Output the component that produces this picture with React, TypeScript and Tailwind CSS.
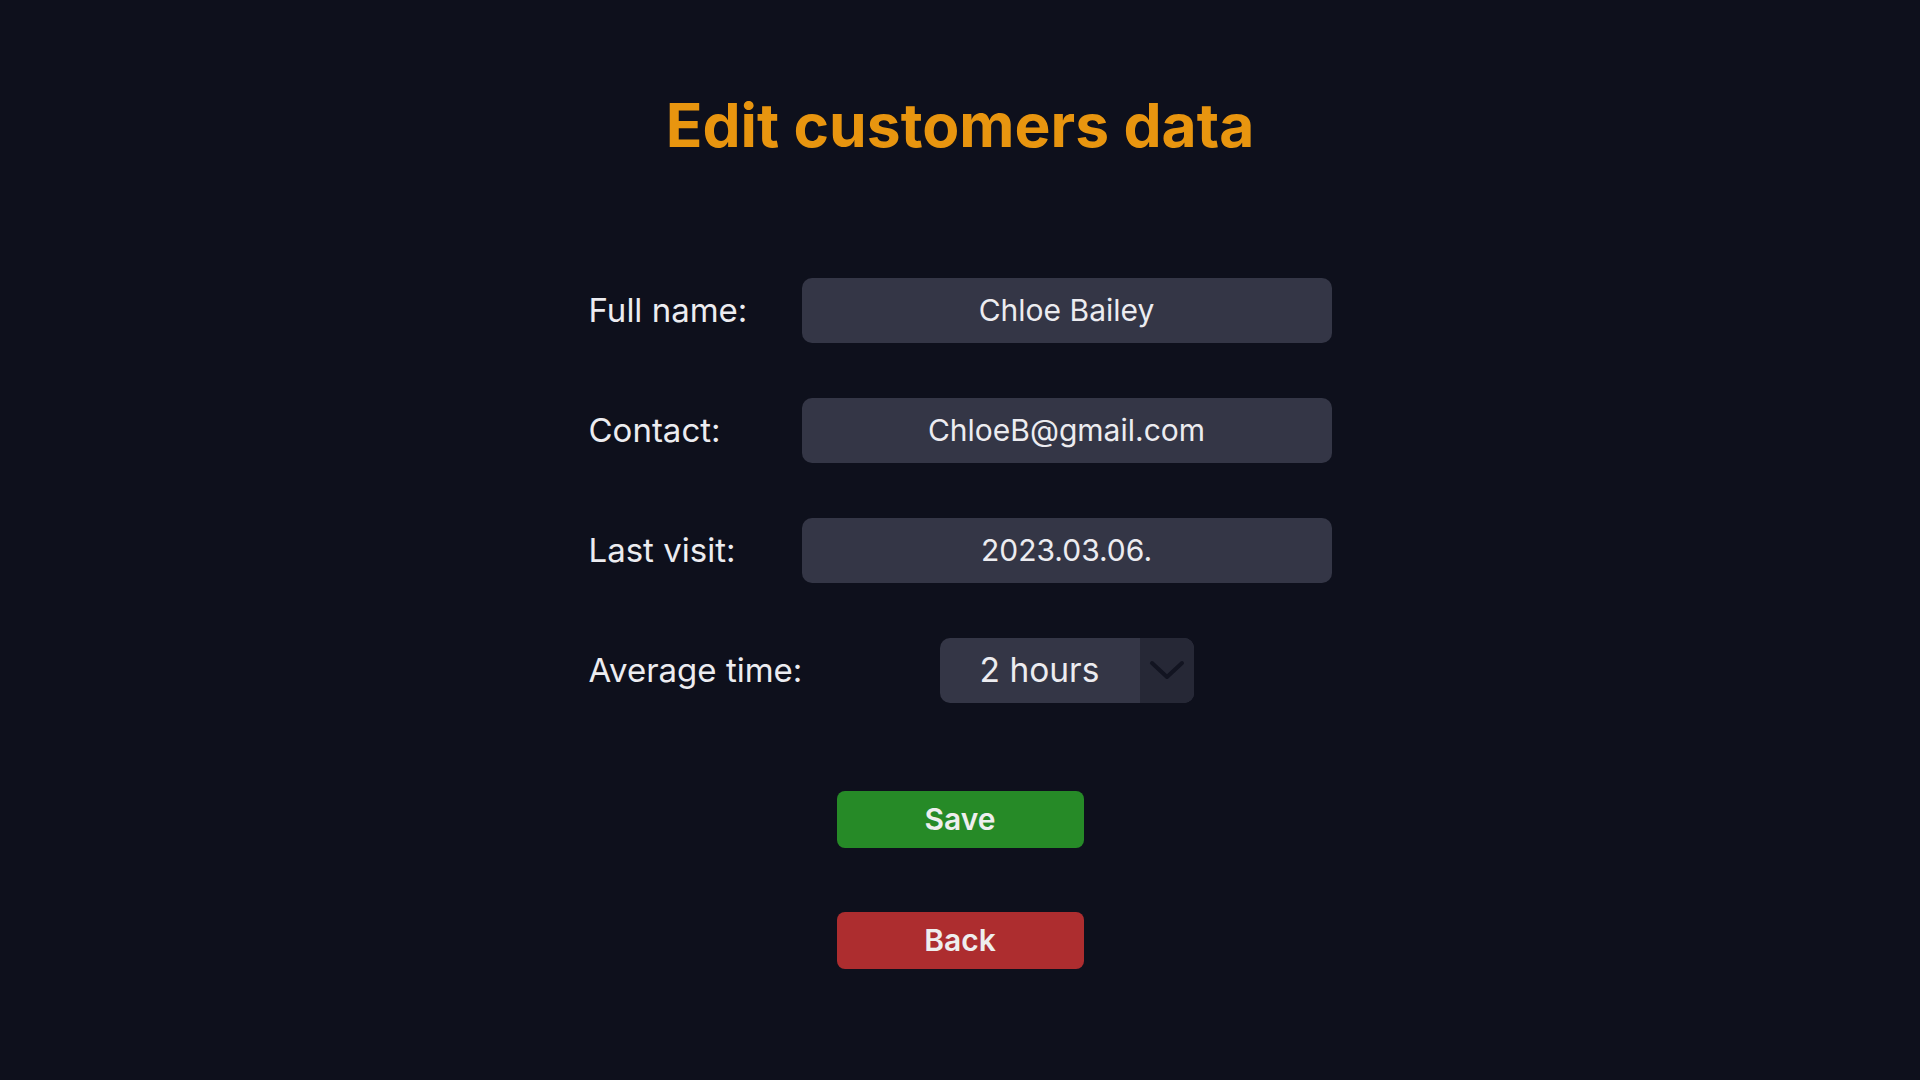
import React from "react";

const rows = [
  { label: "Full name:", value: "Chloe Bailey" },
  { label: "Contact:", value: "ChloeB@gmail.com" },
  { label: "Last visit:", value: "2023.03.06." },
];

export default function App() {
  return (
    <div
      className="min-h-screen w-full bg-[#0e101c] flex flex-col items-center"
      style={{ fontFamily: "Inter, 'Noto Sans', sans-serif" }}
    >
      <h1 className="pt-[95px] text-[60.5px] leading-none font-bold text-[#e8950f]">
        Edit customers data
      </h1>

      <div className="mt-[122px] flex flex-col gap-[55px]">
        {rows.map((r) => (
          <div key={r.label} className="flex items-center">
            <div className="w-[213px] whitespace-nowrap text-[33px] text-[#ececf0] leading-none">
              {r.label}
            </div>
            <div className="w-[530px] h-[65px] rounded-[10px] bg-[#343646] flex items-center justify-center text-[30px] text-[#ececf0]">
              {r.value}
            </div>
          </div>
        ))}
        <div className="flex items-center">
          <div className="w-[213px] whitespace-nowrap text-[33px] text-[#ececf0] leading-none">
            Average time:
          </div>
          <div className="w-[530px] flex justify-center">
            <div className="w-[254px] h-[65px] rounded-[10px] bg-[#343646] flex overflow-hidden">
              <div className="flex-1 flex items-center justify-center text-[33.5px] text-[#ececf0]">
                2 hours
              </div>
              <div className="w-[54px] bg-[#262836] flex items-center justify-center">
                <svg width="36" height="20" viewBox="0 0 36 20" fill="none">
                  <path
                    d="M3 3 L18 17 L33 3"
                    stroke="#121421"
                    strokeWidth="4"
                    strokeLinecap="round"
                    strokeLinejoin="round"
                  />
                </svg>
              </div>
            </div>
          </div>
        </div>
      </div>

      <button className="mt-[88px] w-[247px] h-[57px] rounded-[8px] bg-[#268a27] text-[30px] font-semibold text-[#eeeeee] flex items-center justify-center">
        Save
      </button>
      <button className="mt-[64px] w-[247px] h-[57px] rounded-[8px] bg-[#ad2d2f] text-[30px] font-semibold text-[#eeeeee] flex items-center justify-center">
        Back
      </button>
    </div>
  );
}
